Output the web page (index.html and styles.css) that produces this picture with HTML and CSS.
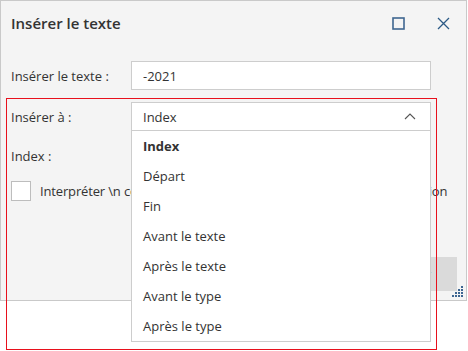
FILE: index.html
```html
<!DOCTYPE html>
<html lang="fr">
  <head>
    <meta charset="UTF-8" />
    <title>Insérer le texte</title>
    <link rel="stylesheet" href="styles.css">
  </head>
  <body>
    <div class="dialog">
      <div class="dialog-header">
        <h1 class="dialog-title">Insérer le texte</h1>
        <div class="header-actions">
          <button class="icon-btn" title="Agrandir">
            <svg width="13" height="13" viewBox="0 0 13 13">
              <rect x="1" y="1" width="11" height="11" fill="none" stroke="#3f6690" stroke-width="1.6" />
            </svg>
          </button>
          <button class="icon-btn" title="Fermer">
            <svg width="13" height="13" viewBox="0 0 13 13">
              <path d="M1 1 L12 12 M12 1 L1 12" stroke="#2c5a86" stroke-width="1.3" fill="none" />
            </svg>
          </button>
        </div>
      </div>

      <div class="dialog-body">
        <div class="form-row">
          <label class="form-label">Insérer le texte :</label>
          <input class="text-input" type="text" value="-2021" />
        </div>
        <div class="form-row">
          <label class="form-label">Insérer à :</label>
          <div class="select-box">
            <span>Index</span>
            <svg width="12" height="7" viewBox="0 0 12 7">
              <path d="M1 6 L6 1 L11 6" stroke="#555" stroke-width="1.1" fill="none" />
            </svg>
          </div>
        </div>
        <div class="form-row index-row">
          <label class="form-label">Index :</label>
          <input class="text-input" type="text" value="0" />
        </div>
        <label class="check-row">
          <span class="check-box"></span>
          <span class="check-text">Interpréter \n comme un caractère de saut de ligne lors de l'insertion</span>
        </label>
      </div>

      <div class="dialog-footer">
        <button class="footer-btn">Insérer</button>
        <button class="footer-btn">Annuler</button>
      </div>

      <svg class="resize-grip" width="12" height="12" viewBox="0 0 12 12">
        <rect x="9" y="0" width="2" height="2" fill="#3c6591" />
        <rect x="6" y="3" width="2" height="2" fill="#3c6591" />
        <rect x="9" y="3" width="2" height="2" fill="#3c6591" />
        <rect x="3" y="6" width="2" height="2" fill="#3c6591" />
        <rect x="6" y="6" width="2" height="2" fill="#3c6591" />
        <rect x="9" y="6" width="2" height="2" fill="#3c6591" />
        <rect x="0" y="9" width="2" height="2" fill="#3c6591" />
        <rect x="3" y="9" width="2" height="2" fill="#3c6591" />
        <rect x="6" y="9" width="2" height="2" fill="#3c6591" />
        <rect x="9" y="9" width="2" height="2" fill="#3c6591" />
      </svg>
    </div>

    <ul class="dropdown-list">
      <li class="selected">Index</li>
      <li>Départ</li>
      <li>Fin</li>
      <li>Avant le texte</li>
      <li>Après le texte</li>
      <li>Avant le type</li>
      <li>Après le type</li>
    </ul>

    <div class="highlight"></div>
  </body>
</html>
```

FILE: styles.css
```css
* {
  margin: 0;
  padding: 0;
  box-sizing: border-box;
}

body {
  background: #fff;
  font-family: "Open Sans", "Noto Sans", sans-serif;
  font-size: 13px;
  color: #333;
  position: relative;
  width: 468px;
  height: 351px;
  overflow: hidden;
}

.dialog {
  width: 467px;
  height: 301px;
  background: #f4f4f4;
  border: 1px solid #c9c9c9;
  position: relative;
  overflow: hidden;
}

.dialog-header {
  height: 44px;
  display: flex;
  align-items: center;
  justify-content: space-between;
  padding: 0 16px 0 10px;
}

.dialog-title {
  font-size: 15px;
  font-weight: 600;
  color: #333;
}

.header-actions {
  display: flex;
  gap: 32px;
  align-items: center;
}

.icon-btn {
  background: none;
  border: none;
  width: 13px;
  height: 13px;
  display: flex;
}

.dialog-body {
  padding: 16px 0 0 10px;
}

.form-row {
  display: flex;
  align-items: center;
  margin-bottom: 12px;
}

.index-row {
  margin-top: -2px;
  margin-bottom: 11px;
}

.form-label {
  width: 120px;
}

.text-input,
.select-box {
  width: 300px;
  height: 29px;
  border: 1px solid #cdcdcd;
  background: #fff;
  padding: 0 11px;
  font-family: inherit;
  font-size: 13px;
  color: #333;
  outline: none;
}

.select-box {
  display: flex;
  align-items: center;
  justify-content: space-between;
  padding-right: 14px;
}

.check-row {
  display: flex;
  align-items: center;
  gap: 9px;
  white-space: nowrap;
}

.check-text {
  letter-spacing: -0.15px;
}

.check-box {
  width: 20px;
  height: 20px;
  border: 1px solid #bdbdbd;
  background: #fff;
  flex-shrink: 0;
}

.dialog-footer {
  display: flex;
  justify-content: flex-end;
  gap: 10px;
  padding-right: 9px;
  margin-top: 56px;
}

.footer-btn {
  width: 100px;
  height: 34px;
  background: #dadada;
  border: none;
  font-family: inherit;
  font-size: 13px;
  color: #333;
}

.resize-grip {
  position: absolute;
  right: 2px;
  bottom: 2px;
}

.dropdown-list {
  position: absolute;
  left: 131px;
  top: 131px;
  width: 300px;
  list-style: none;
  background: #fff;
  border: 1px solid #cdcdcd;
  border-top: none;
}

.dropdown-list li {
  height: 30px;
  line-height: 30px;
  padding-left: 11px;
}

.dropdown-list li.selected {
  font-weight: 700;
}

.highlight {
  position: absolute;
  left: 6px;
  top: 98px;
  width: 431px;
  height: 252px;
  border: 1px solid #e8101c;
  pointer-events: none;
}
```
